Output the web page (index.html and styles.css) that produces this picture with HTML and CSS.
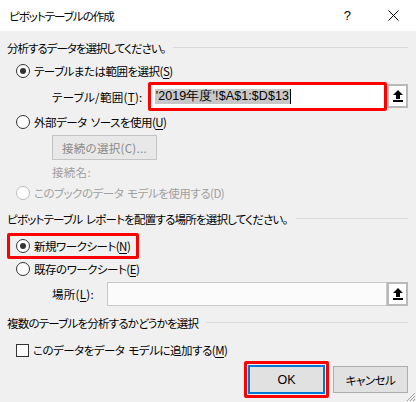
FILE: index.html
```html
<!DOCTYPE html>
<html lang="ja">
<head>
<meta charset="utf-8">
<link rel="stylesheet" href="styles.css">
</head>
<body>
<div class="dialog">
  <div class="titlebar">
    <span class="title">ピボットテーブルの作成</span>
    <span class="help">?</span>
    <svg class="close" width="11" height="11" viewBox="0 0 11 11"><path d="M0.5 0.5 L10.5 10.5 M10.5 0.5 L0.5 10.5" stroke="#000" stroke-width="1"/></svg>
  </div>
  <div class="content">
    <div class="group g1"><span>分析するデータを選択してください。</span><i class="rule"></i></div>

    <div class="opt r1"><span class="radio on"></span><span>テーブルまたは範囲を選択(<u>S</u>)</span></div>

    <div class="field f1">
      <span class="flabel">テーブル/範囲(<u>T</u>):</span>
      <div class="redbox range">
        <div class="input"><span class="sel">'2019年度'!$A$1:$D$13</span><span class="caret"></span></div>
      </div>
      <div class="pick"><svg width="12" height="14" viewBox="0 0 12 14"><path d="M6 1 L11 6 L8 6 L8 10 L4 10 L4 6 L1 6 Z" fill="#000"/><rect x="1" y="11" width="10" height="2" fill="#000"/></svg></div>
    </div>

    <div class="opt r2"><span class="radio"></span><span>外部データ ソースを使用(<u>U</u>)</span></div>

    <div class="indent"><button class="btn conn">接続の選択(C)...</button></div>
    <div class="indent cname">接続名:</div>

    <div class="opt r3 disabled"><span class="radio dis"></span><span>このブックのデータ モデルを使用する(D)</span></div>

    <div class="group g2"><span>ピボットテーブル レポートを配置する場所を選択してください。</span><i class="rule"></i></div>

    <div class="redbox newsheet"><div class="opt"><span class="radio on"></span><span>新規ワークシート(<u>N</u>)</span></div></div>

    <div class="opt r5"><span class="radio"></span><span>既存のワークシート(<u>E</u>)</span></div>

    <div class="field f2">
      <span class="flabel">場所(<u>L</u>):</span>
      <div class="input loc"></div>
      <div class="pick"><svg width="12" height="14" viewBox="0 0 12 14"><path d="M6 1 L11 6 L8 6 L8 10 L4 10 L4 6 L1 6 Z" fill="#000"/><rect x="1" y="11" width="10" height="2" fill="#000"/></svg></div>
    </div>

    <div class="group g3"><span>複数のテーブルを分析するかどうかを選択</span><i class="rule"></i></div>

    <div class="opt c1"><span class="check"></span><span>このデータをデータ モデルに追加する(<u>M</u>)</span></div>

    <div class="actions">
      <div class="redbox okbox"><button class="btn ok">OK</button></div>
      <button class="btn cancel">キャンセル</button>
    </div>
  </div>
  <svg class="grip" width="11" height="11" viewBox="0 0 11 11"><path d="M10 2 L2 10 M10 5 L5 10 M10 8 L8 10" stroke="#a0a0a0" stroke-width="1"/></svg>
</div>
</body>
</html>
```

FILE: styles.css
```css
* { box-sizing: border-box; }
html, body { margin: 0; padding: 0; }
body {
  width: 416px;
  height: 402px;
  background: #f0f0f0;
  font-family: "Noto Sans CJK JP", "Noto Sans", sans-serif;
  font-size: 11.5px;
  letter-spacing: -0.5px;
  word-spacing: 2px;
  font-feature-settings: "palt";
  color: #000;
  overflow: hidden;
}
.dialog { position: relative; width: 416px; height: 402px; }
.titlebar {
  height: 31px;
  background: #fff;
  display: flex;
  align-items: center;
  padding-left: 9px;
}
.title { flex: 1; letter-spacing: -1px; }
.help { font-family: "Liberation Sans", sans-serif; font-size: 13px; letter-spacing: 0; margin-right: 37px; }
.close { margin-right: 17px; }

.content { padding: 0 8px 0 7px; }
.group { display: flex; align-items: center; height: 16px; line-height: 16px; white-space: nowrap; letter-spacing: -0.8px; }
.g1 { margin-top: 9px; letter-spacing: -1px; }
.g2 { margin-top: 10px; }
.g3 { margin-top: 9px; }
.group .rule { flex: 1; height: 1px; background: #dadada; margin-left: 8px; margin-top: -1px; }

.opt { display: flex; align-items: center; height: 16px; line-height: 16px; padding-left: 9px; white-space: nowrap; }
.opt > span:last-child { margin-left: 4px; }
.r1 { margin-top: 7px; }
.r2 { margin-top: 3px; }
.r3 { margin-top: 5px; }
.r5 { margin-top: 2px; }
.c1 { margin-top: 11px; }
.disabled { color: #a0a0a0; }

.radio {
  width: 14px; height: 14px; border-radius: 50%;
  border: 1px solid #333; background: #fff;
  display: inline-flex; align-items: center; justify-content: center;
  flex: none;
}
.radio.on::after { content: ""; width: 6px; height: 6px; border-radius: 50%; background: #333; }
.radio.dis { border-color: #bcbcbc; }
.check { width: 13px; height: 13px; border: 1px solid #333; background: #fff; flex: none; }

u { text-decoration: underline; text-underline-offset: 2px; }

.field { display: flex; align-items: center; white-space: nowrap; }
.flabel { padding-left: 45px; letter-spacing: 0.3px; }
.f1 { margin-top: 3px; height: 29px; }
.f1 .flabel { width: 141px; }
.redbox { border: 3px solid #f00; border-radius: 2px; }
.range { width: 240px; height: 29px; padding: 1px; background: #fff; }
.range .input { display: flex; align-items: center; height: 100%; padding-left: 3px; background: #fff; }
.sel { background: #c8c8c8; font-family: "Liberation Sans", sans-serif; font-size: 12.5px; letter-spacing: 0.1px; word-spacing: 0; line-height: 15px; padding: 0 1px; }
.caret { width: 1px; height: 15px; background: #000; }
.pick {
  width: 21px; height: 24px; border: 2px solid #b9b9b9; background: #fff;
  display: flex; align-items: center; justify-content: center; flex: none;
}
.f1 .pick { margin-top: -1px; }
.f2 { margin-top: 5px; height: 24px; }
.f2 .flabel { width: 100px; }
.input.loc { width: 281px; height: 24px; border: 1px solid #c9c9c9; background: #fbfbfb; }

.indent { padding-left: 45px; }
.btn {
  font-family: inherit; font-size: 11.5px; letter-spacing: -0.5px; font-feature-settings: "palt";
  background: #e1e1e1; border: 1px solid #adadad; color: #000; padding: 0; margin: 0;
}
.conn { margin-top: 5px; width: 105px; height: 25px; background: #e8e8e8; border-color: #c4c4c4; color: #8a8a8a; letter-spacing: 0.3px; }
.cname { margin-top: 4px; height: 16px; line-height: 16px; color: #a0a0a0; letter-spacing: 0.3px; }

.newsheet { margin-top: 6px; width: 132px; height: 26px; display: flex; align-items: center; }
.newsheet .opt { padding-left: 6px; }

.actions { display: flex; justify-content: flex-end; align-items: center; margin-top: 3px; }
.okbox { width: 85px; height: 37px; padding: 1px; margin-right: 4px; }
.ok { width: 100%; height: 100%; border: 2px solid #0078d7; font-family: "Liberation Sans", sans-serif; font-size: 12.5px; letter-spacing: 0; }
.cancel { width: 75px; height: 27px; }
.grip { position: absolute; right: 0; bottom: 0; }
```
